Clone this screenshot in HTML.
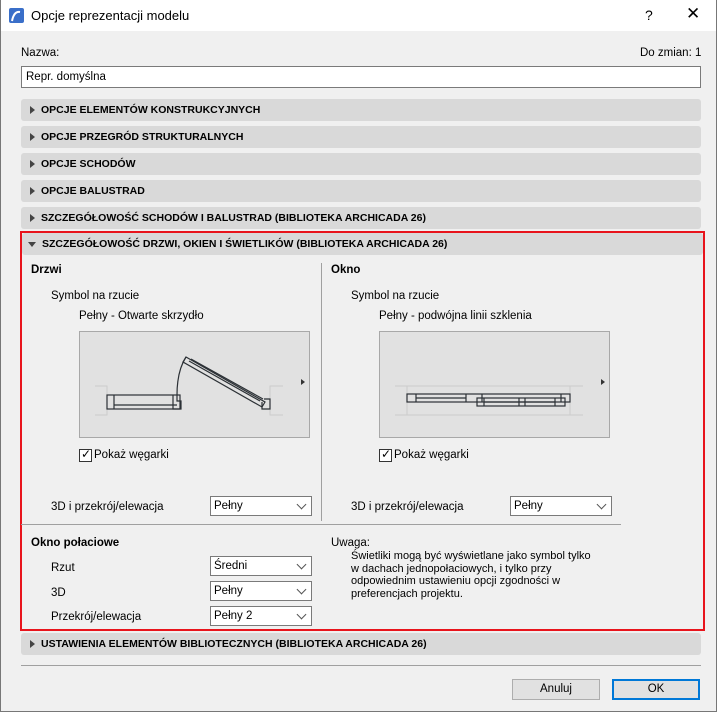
<!DOCTYPE html>
<html><head><meta charset="utf-8"><style>
*{box-sizing:border-box;margin:0;padding:0}
body{width:717px;height:712px;background:#f0f0f0;font-family:"Liberation Sans",sans-serif;font-size:11.5px;color:#000;position:relative;overflow:hidden}
.a{position:absolute;white-space:nowrap}
.bar{position:absolute;left:21px;width:680px;height:22px;background:#d9d9d9;border-radius:3px;font-weight:bold;font-size:10.5px;line-height:22px;padding-left:20px}
.bar.r:before{content:"";position:absolute;left:9px;top:7px;border-left:5px solid #444;border-top:4px solid transparent;border-bottom:4px solid transparent}
.sel{position:absolute;width:102px;height:20px;background:#fff;border:1px solid #7a7a7a;padding-left:3px;line-height:18px}
.sel:after{content:"";position:absolute;right:6px;top:4px;width:6px;height:6px;border-right:1px solid #555;border-bottom:1px solid #555;transform:rotate(45deg)}
.cb{position:absolute;width:13px;height:13px;border:1px solid #333;background:#fff}
.b{font-weight:bold}
</style></head><body>
<div class="a" style="left:0;top:0;width:717px;height:31px;background:#fff"></div>
<div class="a" style="left:0;top:0;width:1px;height:712px;background:#777"></div>
<div class="a" style="left:716px;top:0;width:1px;height:712px;background:#777"></div>
<div class="a" style="left:0;top:711px;width:717px;height:1px;background:#777"></div>
<svg class="a" style="left:9px;top:8px" width="15" height="15"><rect width="15" height="15" rx="2" fill="#3a6fc9"/><path d="M3 13 Q5 3 11 4" stroke="#fff" stroke-width="2" fill="none"/></svg>
<div class="a" style="left:31px;top:8px;font-size:13px">Opcje reprezentacji modelu</div>
<div class="a" style="left:645px;top:7px;font-size:14px">?</div>
<div class="a" style="left:686px;top:4px;font-size:17px">✕</div>
<div class="a" style="left:21px;top:47px">Nazwa:</div>
<div class="a" style="left:640px;top:47px">Do zmian: 1</div>
<div class="a" style="left:21px;top:66px;width:680px;height:22px;background:#fff;border:1px solid #7a7a7a;padding:4px 0 0 4px">Repr. domyślna</div>
<div class="bar r" style="top:99px">OPCJE ELEMENTÓW KONSTRUKCYJNYCH</div>
<div class="bar r" style="top:126px">OPCJE PRZEGRÓD STRUKTURALNYCH</div>
<div class="bar r" style="top:153px">OPCJE SCHODÓW</div>
<div class="bar r" style="top:180px">OPCJE BALUSTRAD</div>
<div class="bar r" style="top:207px">SZCZEGÓŁOWOŚĆ SCHODÓW I BALUSTRAD (BIBLIOTEKA ARCHICADA 26)</div>
<div class="a" style="left:20px;top:231px;width:685px;height:400px;border:2px solid #e8141c"></div>
<div class="bar" style="top:233px;left:22px;width:681px">SZCZEGÓŁOWOŚĆ DRZWI, OKIEN I ŚWIETLIKÓW (BIBLIOTEKA ARCHICADA 26)</div>
<div class="a" style="left:28px;top:242px;border-top:5px solid #444;border-left:4px solid transparent;border-right:4px solid transparent"></div>
<div class="a b" style="left:31px;top:264px">Drzwi</div>
<div class="a b" style="left:331px;top:264px">Okno</div>
<div class="a" style="left:321px;top:263px;width:1px;height:258px;background:#a0a0a0"></div>
<div class="a" style="left:21px;top:524px;width:600px;height:1px;background:#a0a0a0"></div>
<div class="a" style="left:51px;top:290px">Symbol na rzucie</div>
<div class="a" style="left:79px;top:310px">Pełny - Otwarte skrzydło</div>
<div class="a" style="left:351px;top:290px">Symbol na rzucie</div>
<div class="a" style="left:379px;top:310px">Pełny - podwójna linii szklenia</div>
<svg class="a" style="left:79px;top:331px" width="232" height="108"><rect x=".5" y=".5" width="230" height="106" fill="#e1e1e1" stroke="#a8a8a8"/>
<g stroke="#ccc" fill="none"><path d="M16 55H28V84H16M204 55H191V84H204"/></g>
<g stroke="#2b3035" stroke-width="1.2" fill="none"><rect x="28" y="64" width="73" height="14"/><path d="M35 64V78M35 74H98M94 64V78H102V70H98V64"/><path d="M98 64Q98 40 107 26"/><path d="M107 26L186 71L183 76L104 31Z"/><path d="M110 30L181 70M112 28L184 68"/><path d="M185 68H191V78H183V71"/></g>
<path d="M222 48l4 3-4 3z" fill="#333"/></svg>
<svg class="a" style="left:379px;top:331px" width="232" height="108"><rect x=".5" y=".5" width="230" height="106" fill="#e1e1e1" stroke="#a8a8a8"/>
<g stroke="#ccc" fill="none"><path d="M16 55H204M16 84H204M28 55V84M191 55V84"/></g>
<g stroke="#2b3035" stroke-width="1.2" fill="none"><rect x="28" y="63" width="163" height="8"/><path d="M37 63V71M37 67H87M87 63V71M103 63V71M182 63V71"/><rect x="98" y="67" width="88" height="8"/><path d="M105 67V75M105 71H176M176 67V75M140 67V75M146 67V75"/></g>
<path d="M222 48l4 3-4 3z" fill="#333"/></svg>
<div class="cb" style="left:79px;top:449px"></div><div class="a" style="left:81px;top:447px;font-size:12px">✓</div>
<div class="a" style="left:94px;top:449px">Pokaż węgarki</div>
<div class="cb" style="left:379px;top:449px"></div><div class="a" style="left:381px;top:447px;font-size:12px">✓</div>
<div class="a" style="left:394px;top:449px">Pokaż węgarki</div>
<div class="a" style="left:51px;top:501px">3D i przekrój/elewacja</div>
<div class="sel" style="left:210px;top:496px">Pełny</div>
<div class="a" style="left:351px;top:501px">3D i przekrój/elewacja</div>
<div class="sel" style="left:510px;top:496px">Pełny</div>
<div class="a b" style="left:31px;top:537px">Okno połaciowe</div>
<div class="a" style="left:51px;top:562px">Rzut</div>
<div class="sel" style="left:210px;top:556px">Średni</div>
<div class="a" style="left:51px;top:587px">3D</div>
<div class="sel" style="left:210px;top:581px">Pełny</div>
<div class="a" style="left:51px;top:611px">Przekrój/elewacja</div>
<div class="sel" style="left:210px;top:606px">Pełny 2</div>
<div class="a" style="left:331px;top:537px">Uwaga:</div>
<div class="a" style="left:351px;top:550px;font-size:11px;line-height:12.5px;white-space:normal;width:246px">Świetliki mogą być wyświetlane jako symbol tylko w dachach jednopołaciowych, i tylko przy odpowiednim ustawieniu opcji zgodności w preferencjach projektu.</div>
<div class="bar r" style="top:633px">USTAWIENIA ELEMENTÓW BIBLIOTECZNYCH (BIBLIOTEKA ARCHICADA 26)</div>
<div class="a" style="left:21px;top:665px;width:680px;height:1px;background:#a0a0a0"></div>
<div class="a" style="left:512px;top:679px;width:88px;height:21px;background:#e1e1e1;border:1px solid #adadad;text-align:center;line-height:19px">Anuluj</div>
<div class="a" style="left:612px;top:679px;width:88px;height:21px;background:#e1e1e1;border:2px solid #0078d7;text-align:center;line-height:17px">OK</div>
</body></html>
